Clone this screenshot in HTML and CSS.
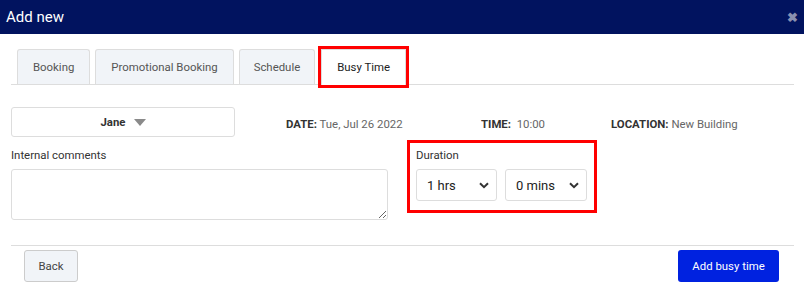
FILE: index.html
```html
<!DOCTYPE html>
<html>
<head>
    <link rel="stylesheet" href="styles.css">
</head>
<body>
    <div class="modal">
        <div class="modal-header">
            <span class="modal-title">Add new</span>
            <span class="modal-close">&#x2716;</span>
        </div>
        <div class="modal-body">
            <div class="tabs">
                <div class="tab">Booking</div>
                <div class="tab">Promotional Booking</div>
                <div class="tab tab-schedule">Schedule</div>
                <div class="tab active">Busy Time</div>
            </div>

            <div class="info-row">
                <div class="staff-select">
                    <span>Jane</span>
                    <svg width="12" height="7" viewBox="0 0 12 7"><path d="M0 0h12L6 7z" fill="#8a8a8a"/></svg>
                </div>
                <div class="info info-date"><b>DATE:</b> Tue, Jul 26 2022</div>
                <div class="info info-time"><b>TIME:</b>&nbsp; 10:00</div>
                <div class="info"><b>LOCATION:</b> New Building</div>
            </div>

            <div class="form-row">
                <div class="comments">
                    <label class="field-label">Internal comments</label>
                    <textarea class="comments-box"></textarea>
                </div>
                <div class="duration">
                    <label class="field-label">Duration</label>
                    <div class="duration-selects">
                        <div class="select select-hrs">
                            <span>1 hrs</span>
                            <svg width="10" height="7" viewBox="0 0 10 7"><path d="M1 1.2l4 4 4-4" fill="none" stroke="#333" stroke-width="2"/></svg>
                        </div>
                        <div class="select select-mins">
                            <span>0 mins</span>
                            <svg width="10" height="7" viewBox="0 0 10 7"><path d="M1 1.2l4 4 4-4" fill="none" stroke="#333" stroke-width="2"/></svg>
                        </div>
                    </div>
                </div>
            </div>

            <div class="modal-footer">
                <button class="btn btn-back">Back</button>
                <button class="btn btn-primary">Add busy time</button>
            </div>
        </div>
    </div>
</body>
</html>
```

FILE: styles.css
```css
body {
    margin: 0;
    font-family: Roboto, "Liberation Sans", sans-serif;
    font-size: 11.4px;
    color: #333;
    background: #fff;
}
.modal-header {
    height: 34px;
    background: #01135f;
    display: flex;
    align-items: center;
    justify-content: space-between;
    padding: 0 6px 0 6px;
}
.modal-title {
    color: #fff;
    font-size: 15px;
}
.modal-close {
    color: #8a90b0;
    font-size: 13px;
    font-weight: bold;
}
.modal-body {
    padding: 0 10px 0 11px;
}
.tabs {
    display: flex;
    gap: 5px;
    margin-top: 15px;
    padding-left: 6px;
    border-bottom: 1px solid #ddd;
}
.tab {
    height: 34px;
    line-height: 34px;
    padding: 0 15px;
    background: #f1f4f8;
    border: 1px solid #ddd;
    border-bottom: none;
    border-radius: 3px 3px 0 0;
    color: #555;
}
.tab-schedule {
    padding: 0 14px;
}
.tab.active {
    background: #fff;
    color: #222;
    margin-left: 1px;
    margin-bottom: -1px;
    height: 35px;
    border-radius: 0;
    outline: 3px solid #f00;
    position: relative;
}
.info-row {
    display: flex;
    align-items: center;
    margin-top: 22px;
    padding-top: 1px;
}
.staff-select {
    width: 222px;
    height: 28px;
    border: 1px solid #ddd;
    border-radius: 3px;
    display: flex;
    align-items: center;
    justify-content: center;
    gap: 8px;
    font-weight: bold;
    color: #333;
    margin-top: -1px;
}
.info {
    color: #666;
    padding-top: 2px;
}
.info b {
    color: #333;
}
.info-date {
    margin-left: 51px;
    width: 195px;
}
.info-time {
    width: 130px;
}
.form-row {
    display: flex;
    align-items: flex-start;
    margin-top: 3px;
}
.comments {
    width: 377px;
    padding-top: 7px;
    display: flex;
    flex-direction: column;
}
.field-label {
    display: block;
    line-height: 16px;
    margin-bottom: 6px;
    color: #333;
}
.comments-box {
    height: 49px;
    border: 1px solid #ddd;
    border-radius: 3px;
    margin: 0;
    padding: 0;
    resize: vertical;
}
.duration {
    margin-left: 19px;
    width: 172px;
    border: 3px solid #f00;
    padding: 4px 6px 9px 6px;
}
.duration-selects {
    display: flex;
    gap: 8px;
}
.select {
    height: 30px;
    border: 1px solid #ddd;
    border-radius: 3px;
    display: flex;
    align-items: center;
    justify-content: space-between;
    padding: 0 7px 0 10px;
    font-size: 13px;
    color: #222;
}
.select-hrs {
    width: 62px;
}
.select-mins {
    width: 63px;
}
.modal-footer {
    margin-top: 25px;
    border-top: 1px solid #ddd;
    padding: 4px 15px 0 13px;
    display: flex;
    justify-content: space-between;
}
.btn {
    height: 32px;
    border-radius: 3px;
    font-family: Roboto, "Liberation Sans", sans-serif;
    font-size: 11.4px;
}
.btn-back {
    width: 54px;
    background: #f1f4f8;
    border: 1px solid #ccc;
    color: #444;
}
.btn-primary {
    width: 101px;
    background: #0022e0;
    border: none;
    color: #fff;
}
```
